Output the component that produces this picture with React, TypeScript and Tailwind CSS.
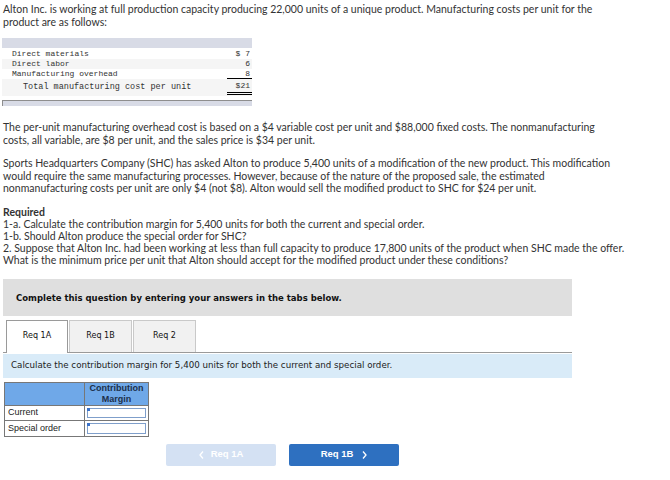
const costRows = [
  { label: 'Direct materials', value: '$ 7', bg: 'bg-white', h: 'h-[11px]' },
  { label: 'Direct labor', value: '6', bg: 'bg-[#f5f5f5]', h: 'h-[10px]' },
  { label: 'Manufacturing overhead', value: '8', bg: 'bg-white', h: 'h-[10px]', underline: true },
]

const tabs = ['Req 1A', 'Req 1B', 'Req 2']

function AnswerCell() {
  return (
    <div className="relative h-full p-[2px] bg-white">
      <div className="h-full border border-[#7f9fcb] bg-white" />
      <div className="absolute left-[2px] top-[2px] w-[3px] h-[3px] bg-[#3a72c9]" />
    </div>
  )
}

export default function App() {
  return (
    <div className="w-[670px] h-[480px] bg-white px-[3px] pt-[3px] text-[#333] font-['Lato',sans-serif] text-[10.5px] leading-[12.5px]">
      <p>
        Alton Inc. is working at full production capacity producing 22,000 units of a unique product. Manufacturing costs per unit for the
        <br />
        product are as follows:
      </p>

      {/* cost table */}
      <div className="mt-[10px] -ml-px w-[250px] font-['Liberation_Mono',monospace] text-[8px] leading-none">
        <div className="h-[10px] bg-[#d8dbe6]" />
        {costRows.map((r) => (
          <div key={r.label} className={`flex items-center ${r.h} ${r.bg}`}>
            <div className="flex-1 pl-[10px]">{r.label}</div>
            <div className={`w-[25px] h-full flex items-center justify-end pr-[2px] ${r.underline ? 'border-b border-black' : ''}`}>
              {r.value}
            </div>
          </div>
        ))}
        <div className="flex h-[17px] bg-[#f5f5f5]">
          <div className="flex-1 pl-[21px] flex items-center text-[8.5px]">Total manufacturing cost per unit</div>
          <div className="w-[25px] h-[16px] flex items-center justify-end pr-[2px] border-b-[3px] border-double border-black">
            $21
          </div>
        </div>
        <div className="mt-[4px] h-[6px] bg-[#d8dbe6] border-t border-l border-[#8e8e8e]" />
      </div>

      <p className="mt-[15px]">
        The per-unit manufacturing overhead cost is based on a $4 variable cost per unit and $88,000 fixed costs. The nonmanufacturing
        <br />
        costs, all variable, are $8 per unit, and the sales price is $34 per unit.
      </p>

      <p className="mt-[11px]">
        Sports Headquarters Company (SHC) has asked Alton to produce 5,400 units of a modification of the new product. This modification
        <br />
        would require the same manufacturing processes. However, because of the nature of the proposed sale, the estimated
        <br />
        nonmanufacturing costs per unit are only $4 (not $8). Alton would sell the modified product to SHC for $24 per unit.
      </p>

      <div className="mt-[11px] leading-[12px]">
        <p className="font-bold">Required</p>
        <p>1-a. Calculate the contribution margin for 5,400 units for both the current and special order.</p>
        <p>1-b. Should Alton produce the special order for SHC?</p>
        <p>
          2. Suppose that Alton Inc. had been working at less than full capacity to produce 17,800 units of the product when SHC made the offer.
          <br />
          What is the minimum price per unit that Alton should accept for the modified product under these conditions?
        </p>
      </div>

      {/* question panel */}
      <div className="mt-[13px] w-[569px] font-['DejaVu_Sans',sans-serif] text-[#111]">
        <div className="h-[37px] bg-[#dfdfdf] flex items-center pl-[13px] pt-[2px] text-[8.5px] font-bold">
          Complete this question by entering your answers in the tabs below.
        </div>

        <div className="mt-[4px] flex gap-[1px] pl-[3px] border-b border-[#9a9a9a] h-[33px] items-end">
          {tabs.map((t, i) => (
            <div
              key={t}
              className={
                i === 0
                  ? 'w-[62px] h-[33px] -mb-px bg-white border border-b-0 border-[#9a9a9a] flex items-center justify-center text-[8px]'
                  : 'w-[63px] h-[32px] bg-[#f1f1f1] border border-b-0 border-[#c9c9c9] flex items-center justify-center text-[8px]'
              }
            >
              {t}
            </div>
          ))}
        </div>

        <div className="mt-px h-[24px] bg-[#d9ebf8] flex items-center pl-[8px] text-[8.7px] text-[#222]">
          Calculate the contribution margin for 5,400 units for both the current and special order.
        </div>

        {/* answer table */}
        <div className="mt-[4px] ml-px w-[145px] border border-[#777] font-['Liberation_Sans',sans-serif] text-[9px] text-[#222]">
          <div className="flex h-[23px] bg-[#6fa8e8] border-b border-[#777]">
            <div className="w-[80px] border-r border-[#777]" />
            <div className="flex-1 flex items-center justify-center text-center font-bold leading-[11px] text-[#1c2f4a]">
              Contribution
              <br />
              Margin
            </div>
          </div>
          {['Current', 'Special order'].map((label, i) => (
            <div key={label} className={`flex h-[15px] ${i === 0 ? 'border-b border-[#777]' : ''}`}>
              <div className="w-[80px] border-r border-[#777] flex items-center pl-[3px] bg-white">{label}</div>
              <div className="flex-1">
                <AnswerCell />
              </div>
            </div>
          ))}
        </div>

        {/* nav buttons */}
        <div className="mt-[7px] ml-[163px] flex gap-[13px] font-['Liberation_Sans',sans-serif] text-[9.5px] font-bold text-white">
          <div className="w-[110px] h-[22px] rounded-[2px] bg-[#d4e1f3] flex items-center justify-center gap-[7px]">
            <svg width="5" height="8" viewBox="0 0 5 8" fill="none" stroke="white" strokeWidth="1.3">
              <polyline points="4,0.5 1,4 4,7.5" />
            </svg>
            <span>Req 1A</span>
          </div>
          <div className="w-[110px] h-[22px] rounded-[2px] bg-[#2e70c0] flex items-center justify-center gap-[9px]">
            <span>Req 1B</span>
            <svg width="5" height="8" viewBox="0 0 5 8" fill="none" stroke="white" strokeWidth="1.3">
              <polyline points="1,0.5 4,4 1,7.5" />
            </svg>
          </div>
        </div>
      </div>
    </div>
  )
}
